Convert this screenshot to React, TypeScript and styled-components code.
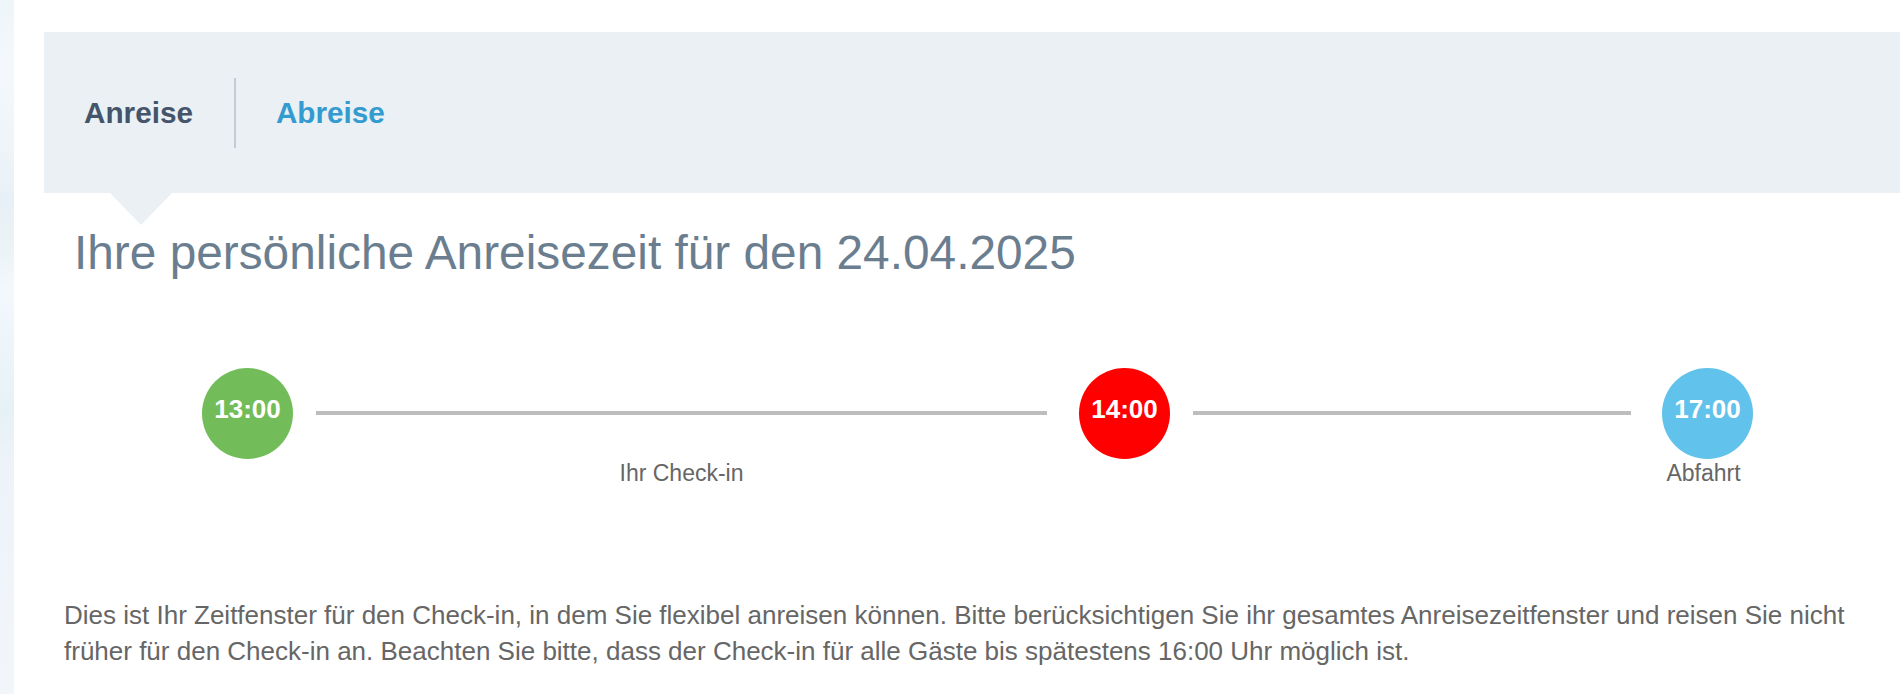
import React from "react";
import styled, { createGlobalStyle } from "styled-components";

const GlobalStyle = createGlobalStyle`
  html, body {
    margin: 0;
    padding: 0;
  }
  body {
    font-family: "Liberation Sans", Arial, Helvetica, sans-serif;
    background: linear-gradient(
      180deg,
      #eef5f9 0px,
      #f4f8fd 70px,
      #eef4f8 150px,
      #e8f0f7 200px,
      #eaf2f5 240px,
      #f3f8fd 290px,
      #e6f1f6 410px,
      #eef3f9 470px,
      #f2f6fb 694px
    );
    min-height: 694px;
  }
`;

const Page = styled.div`
  margin-left: 14px;
  background: #ffffff;
  min-height: 694px;
  padding: 32px 0 0 30px;
  box-sizing: border-box;
`;

const TabBar = styled.div`
  position: relative;
  height: 161px;
  background: #eaf0f3;
  display: flex;
  align-items: center;
  padding-left: 40px;

  &::after {
    content: "";
    position: absolute;
    left: 66px;
    top: 100%;
    width: 0;
    height: 0;
    border-left: 31px solid transparent;
    border-right: 31px solid transparent;
    border-top: 32px solid #eaf0f3;
  }
`;

const Tab = styled.div<{ $active?: boolean }>`
  font-size: 29.7px;
  font-weight: 700;
  color: ${(p) => (p.$active ? "#44546a" : "#339bd0")};
  cursor: pointer;
`;

const TabDivider = styled.div`
  width: 2px;
  height: 70px;
  background: #c3ccd3;
  margin: 0 40px 0 41px;
`;

const Content = styled.div`
  padding: 0 20px;
`;

const Heading = styled.h2`
  margin: 33px 0 0 10px;
  font-size: 47.8px;
  font-weight: 400;
  line-height: 1.15;
  color: #6b7e8f;
`;

const Timeline = styled.div`
  display: flex;
  align-items: flex-start;
  margin: 87px 0 0 138px;
`;

const Stop = styled.div`
  display: flex;
  flex-direction: column;
  align-items: center;
  width: 91px;
`;

const Circle = styled.div<{ $color: string }>`
  width: 91px;
  height: 91px;
  border-radius: 50%;
  background: ${(p) => p.$color};
  color: #ffffff;
  font-size: 26px;
  font-weight: 700;
  display: flex;
  align-items: center;
  justify-content: center;
  padding-bottom: 7px;
  box-sizing: border-box;
`;

const Segment = styled.div<{ $width: number; $after: number }>`
  display: flex;
  flex-direction: column;
  align-items: center;
  width: ${(p) => p.$width}px;
  margin: 0 ${(p) => p.$after}px 0 23px;
`;

const Track = styled.div`
  height: 91px;
  width: 100%;
  display: flex;
  align-items: center;
`;

const Bar = styled.div`
  height: 4px;
  width: 100%;
  background: #bdbdbd;
`;

const Label = styled.div<{ $shift?: number }>`
  margin-top: 1px;
  margin-right: ${(p) => p.$shift ?? 0}px;
  font-size: 23px;
  color: #666666;
  white-space: nowrap;
`;

const Note = styled.p`
  margin: 110px 0 0 0;
  font-size: 26px;
  line-height: 36px;
  color: #666666;
`;

export default function App() {
  return (
    <>
      <GlobalStyle />
      <Page>
        <TabBar>
          <Tab $active>Anreise</Tab>
          <TabDivider />
          <Tab>Abreise</Tab>
        </TabBar>
        <Content>
          <Heading>Ihre persönliche Anreisezeit für den 24.04.2025</Heading>
          <Timeline>
            <Stop>
              <Circle $color="#72bd59">13:00</Circle>
            </Stop>
            <Segment $width={731} $after={32}>
              <Track>
                <Bar />
              </Track>
              <Label>Ihr Check-in</Label>
            </Segment>
            <Stop>
              <Circle $color="#ff0000">14:00</Circle>
            </Stop>
            <Segment $width={438} $after={31}>
              <Track>
                <Bar />
              </Track>
            </Segment>
            <Stop>
              <Circle $color="#61c2eb">17:00</Circle>
              <Label $shift={8}>Abfahrt</Label>
            </Stop>
          </Timeline>
          <Note>
            Dies ist Ihr Zeitfenster für den Check-in, in dem Sie flexibel anreisen können. Bitte
            berücksichtigen Sie ihr gesamtes Anreisezeitfenster und reisen Sie nicht früher für den
            Check-in an. Beachten Sie bitte, dass der Check-in für alle Gäste bis spätestens 16:00
            Uhr möglich ist.
          </Note>
        </Content>
      </Page>
    </>
  );
}
